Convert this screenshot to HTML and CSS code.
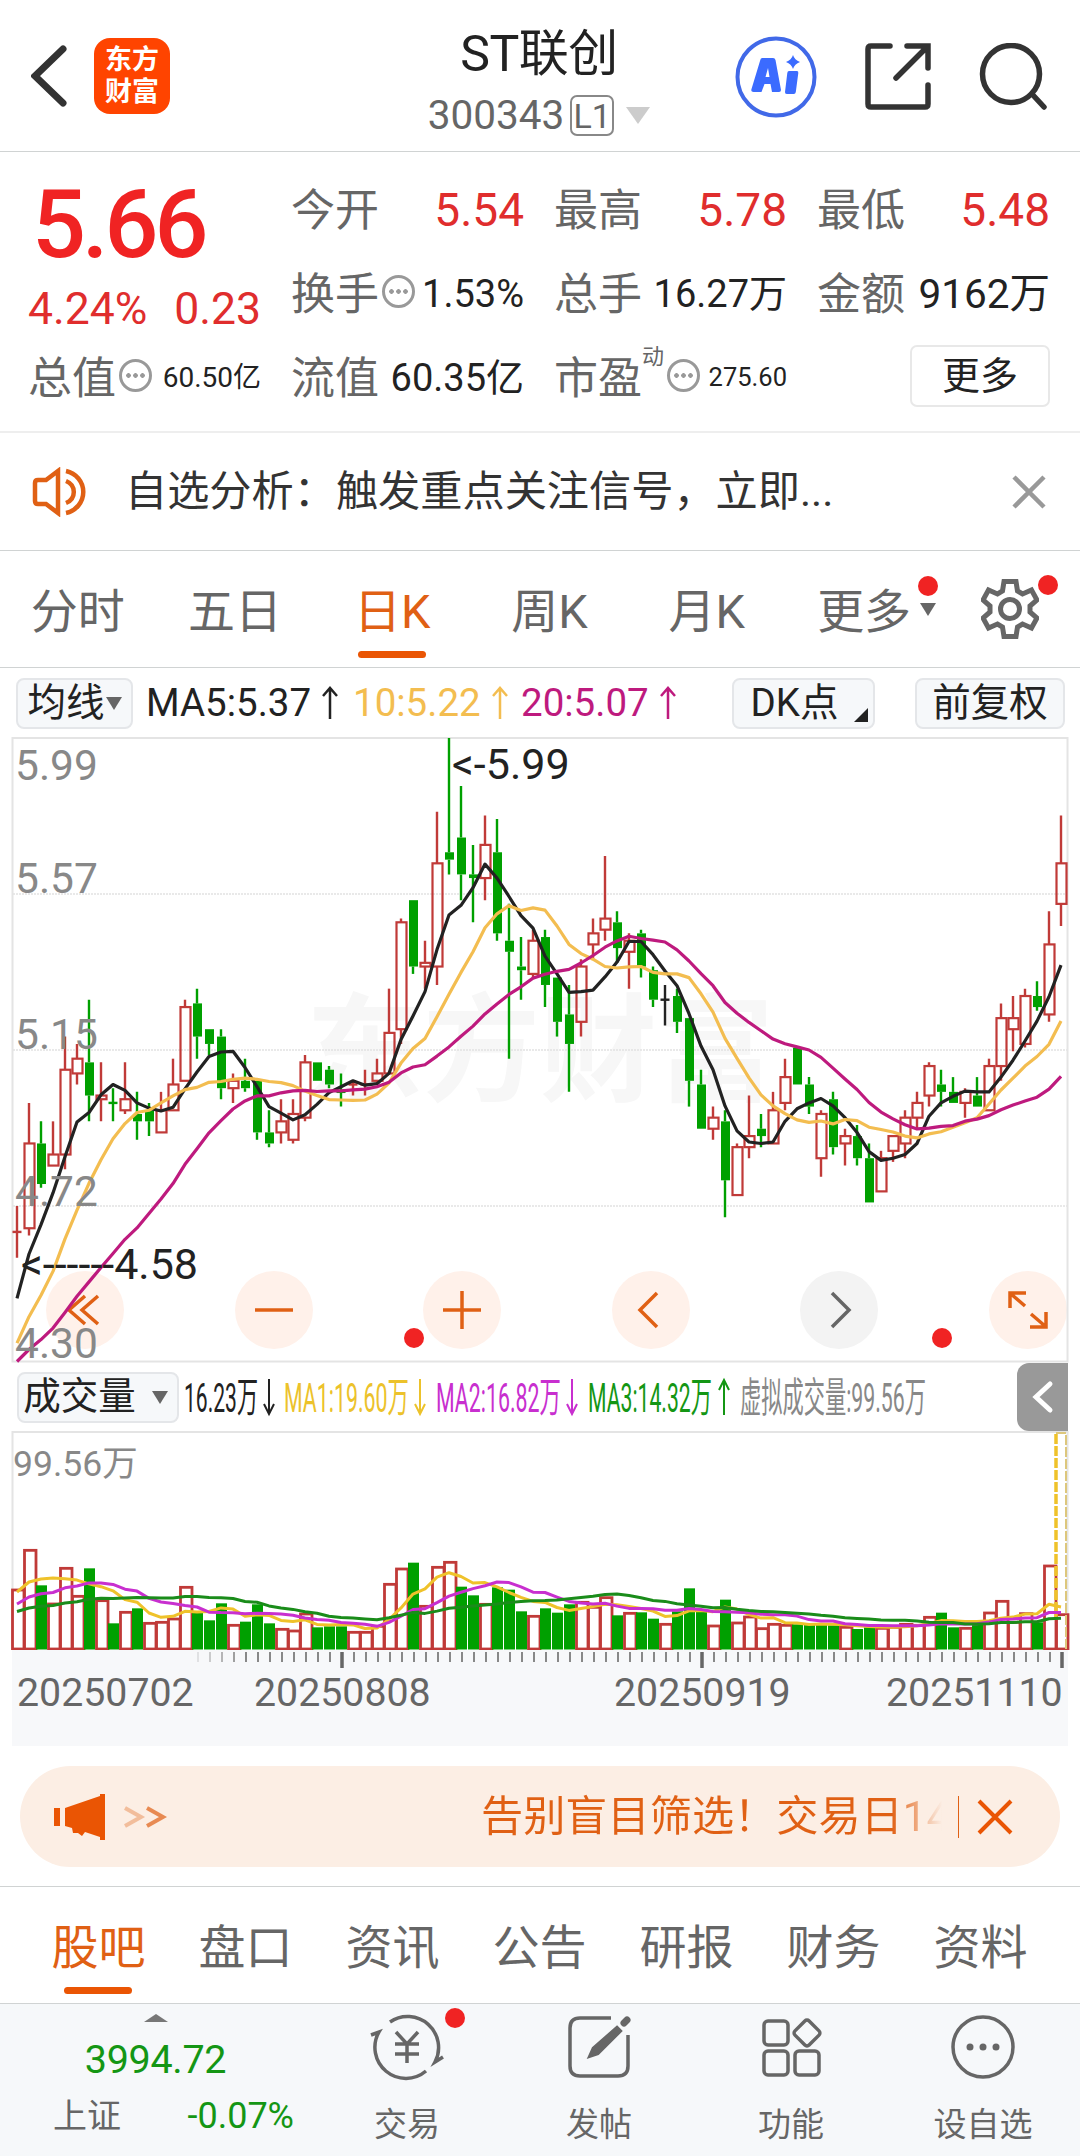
FILE: index.html
```html
<!DOCTYPE html>
<html lang="zh-CN">
<head>
    <meta charset="UTF-8">
    <meta name="viewport" content="width=device-width, initial-scale=1.0">
    <title>ST联创 300343</title>
    <link rel="stylesheet" href="styles.css">
</head>
<body>
    <header class="top-bar">
        <div class="top-left">
            <svg class="back" width="36" height="62" viewBox="0 0 36 62"><path d="M32 4 L4 31 L32 58"/></svg>
            <div class="logo"><span>东方</span><span>财富</span></div>
        </div>
        <div class="top-title">
            <h1>ST联创</h1>
            <div class="code">300343<span class="level">L1</span><i class="tri tri-title"></i></div>
        </div>
        <div class="top-actions">
            <svg width="82" height="82" viewBox="0 0 82 82">
                <circle cx="41" cy="41" r="38.5" fill="none" stroke="#4169e8" stroke-width="4"/>
                <path d="M27 22 h11 q2 0 2.500 2 l5.500 30 q0 2 -2 2 h-7 l-1.500 -8 h-6 l-3 8 h-8 q-3 0 -2 -3 l8.500 -28 q.500 -3 2 -3 z M33 32 l-2.500 9 h4 z" fill="#3b6bff" fill-rule="evenodd"/>
                <path d="M54 35 h8 q1.500 0 1.300 2 l-2.500 19 q-.3 2 -2 2 h-7 q-2 0 -1.800 -2 l2.300 -19 q.2 -2 1.700 -2 z" fill="#3b6bff"/>
                <path d="M58 19 q1.500 5 7 7 q-5.500 2 -7 7 q-1.500 -5 -7 -7 q5.500 -2 7 -7 z" fill="#3b6bff"/>
            </svg>
            <svg class="stroke-dark" width="66" height="68" viewBox="0 0 66 68">
                <path d="M25 3 H6 Q3 3 3 6 V61 Q3 64 6 64 H60 Q63 64 63 61 V42"/>
                <path d="M42 3 H63 V25 M62 4 L31 35"/>
            </svg>
            <svg class="stroke-dark" width="68" height="68" viewBox="0 0 68 68">
                <circle cx="32" cy="31" r="28.500"/><path d="M53 51 L65 64"/>
            </svg>
        </div>
    </header>

    <section class="quote">
        <div class="price">
            <strong>5.66</strong>
            <div class="change"><span>4.24%</span><span>0.23</span></div>
        </div>
        <div class="cell"><label>今开</label><b class="up">5.54</b></div>
        <div class="cell"><label>最高</label><b class="up">5.78</b></div>
        <div class="cell"><label>最低</label><b class="up">5.48</b></div>
        <div class="cell"><label>换手</label><i class="info"></i><b class="mid">1.53%</b></div>
        <div class="cell"><label>总手</label><b class="mid">16.27万</b></div>
        <div class="cell"><label>金额</label><b class="wide">9162万</b></div>
        <div class="cell"><label>总值</label><i class="info"></i><b class="small">60.50亿</b></div>
        <div class="cell"><label>流值</label><b class="mid">60.35亿</b></div>
        <div class="cell"><label>市盈</label><sup>动</sup><i class="info"></i><b class="tiny">275.60</b></div>
        <div class="cell"><button class="more">更多</button></div>
    </section>

    <section class="notice">
        <svg width="60" height="50" viewBox="0 0 60 50">
            <path d="M3 16 q0 -3 3 -3 h8 l12 -9 v42 l-12 -9 h-8 q-3 0 -3 -3 z"/>
            <path d="M34 14 a13 12 0 0 1 0 22 M34 4 a22 21.500 0 0 1 0 42"/>
        </svg>
        <p>自选分析：触发重点关注信号，立即...</p>
        <svg class="close" width="34" height="34" viewBox="0 0 34 34"><path d="M2 2 L32 32 M32 2 L2 32"/></svg>
    </section>

    <nav class="period-tabs">
        <a>分时</a>
        <a>五日</a>
        <a class="active">日K</a>
        <a>周K</a>
        <a>月K</a>
        <a class="has-menu">更多<i class="tri tri-more"></i><i class="dot dot-more"></i></a>
        <a class="settings">
            <svg width="58" height="60" viewBox="0 0 58 60">
                <path d="M23 2.500 H35 L36.500 12 L41.500 15 L50.500 11 L56 21 L49 27 V33 L56 39 L50.500 49 L41.500 45 L36.500 48 L35 57.500 H23 L21.500 48 L16.500 45 L7.500 49 L2 39 L9 33 V27 L2 21 L7.500 11 L16.500 15 L21.500 12 Z"/>
                <circle cx="29" cy="30" r="9.500"/>
            </svg>
            <i class="dot dot-settings"></i>
        </a>
    </nav>

    <div class="ma-bar">
        <button class="chip chip-ma">均线<i class="tri tri-ma"></i></button>
        <span class="ma ma5">MA5:5.37<svg width="18" height="34" viewBox="0 0 18 34"><path d="M9 33 V2 M2 10 L9 2 L16 10"/></svg></span>
        <span class="ma ma10">10:5.22<svg width="18" height="34" viewBox="0 0 18 34"><path d="M9 33 V2 M2 10 L9 2 L16 10"/></svg></span>
        <span class="ma ma20">20:5.07<svg width="18" height="34" viewBox="0 0 18 34"><path d="M9 33 V2 M2 10 L9 2 L16 10"/></svg></span>
        <button class="chip chip-dk">DK点<i class="corner"></i></button>
        <button class="chip chip-fq">前复权</button>
    </div>

    <section class="kline">
        <div class="chart-tools">
            <button><svg width="40" height="40" viewBox="0 0 40 40"><path d="M20 6 L4 20 L20 34 M33 6 L17 20 L33 34"/></svg></button>
            <button><svg width="40" height="40" viewBox="0 0 40 40"><path d="M1 20 H39"/></svg></button>
            <button><svg width="40" height="40" viewBox="0 0 40 40"><path d="M1 20 H39 M20 1 V39"/></svg></button>
            <button><svg width="40" height="40" viewBox="0 0 40 40"><path d="M26 3 L9 20 L26 37"/></svg></button>
            <button class="off"><svg width="40" height="40" viewBox="0 0 40 40"><path d="M13 3 L30 20 L13 37"/></svg></button>
            <button><svg width="40" height="40" viewBox="0 0 40 40"><path d="M2 18 V3 H18 M3 4 L17 16 M38 22 V37 H22 M37 36 L23 24"/></svg></button>
        </div>
        <svg id="kline" width="1080" height="626" viewBox="0 737 1080 626"></svg>
        <i class="dot dot-tool-a"></i>
        <i class="dot dot-tool-b"></i>
    </section>

    <div class="vol-bar">
        <button class="chip chip-vol">成交量<i class="tri tri-vol"></i></button>
        <svg id="vol-legend" width="750" height="60" viewBox="180 1366 750 60"></svg>
        <button class="side-tab"><svg width="22" height="34" viewBox="0 0 22 34"><path d="M18 4 L4 17 L18 30"/></svg></button>
    </div>

    <svg id="volume" class="volume" width="1080" height="219" viewBox="0 1431 1080 219"></svg>
    <svg id="axis" class="axis" width="1056" height="96" viewBox="12 1650 1056 96"></svg>

    <aside class="promo">
        <svg width="54" height="46" viewBox="0 0 54 46"><path d="M0 14 h6 v18 h-6 z M11 14 L46 2 V0 H51 V46 H46 V43 L31 38 L28 42 L24 39 L19 39 L18 34 L11 32 Z" fill="#ea5504"/></svg>
        <svg class="chevrons" width="44" height="22" viewBox="0 0 44 22"><path d="M2 2 L18 11 L2 20" opacity=".35"/><path d="M24 2 L40 11 L24 20" opacity=".7"/></svg>
        <p>告别盲目筛选！交易日14</p>
        <i class="divider"></i>
        <svg class="promo-close" width="36" height="36" viewBox="0 0 36 36"><path d="M2 2 L34 34 M34 2 L2 34"/></svg>
    </aside>

    <nav class="info-tabs">
        <a class="active">股吧</a><a>盘口</a><a>资讯</a><a>公告</a><a>研报</a><a>财务</a><a>资料</a>
    </nav>

    <footer class="bottom-bar">
        <div class="index">
            <i class="tri-up"></i>
            <span class="index-value">3994.72</span>
            <div class="index-row"><span>上证</span><span class="down">-0.07%</span></div>
        </div>
        <a>
            <svg width="76" height="68" viewBox="0 0 76 68">
                <path d="M21 9 A31 31 0 0 1 66 49 L74 44 M57 58 A31 31 0 0 1 10 19 L2 22"/>
                <path d="M27 19 L38 31 L49 19 M38 31 V50 M26 31 H50 M26 41 H50"/>
            </svg>
            <span>交易</span><i class="dot dot-trade"></i>
        </a>
        <a>
            <svg width="64" height="68" viewBox="0 0 64 68">
                <path d="M44 5 H13 Q3 5 3 15 V53 Q3 63 13 63 H51 Q61 63 61 53 V22"/>
                <path d="M50 14 L54 18 L31 41 L22 44 L26 35 Z" fill="#666" stroke-width="2.500"/><path d="M57 10 L60 7" stroke-width="7" stroke-linecap="round"/>
            </svg>
            <span>发帖</span>
        </a>
        <a>
            <svg width="64" height="68" viewBox="0 0 64 68">
                <rect x="5" y="8" width="24" height="24" rx="4"/><rect x="5" y="38" width="24" height="24" rx="4"/><rect x="36" y="38" width="24" height="24" rx="4"/>
                <rect x="38" y="10" width="20" height="20" rx="3" transform="rotate(45 48 20)"/>
            </svg>
            <span>功能</span>
        </a>
        <a>
            <svg width="66" height="68" viewBox="0 0 66 68">
                <circle cx="33" cy="34" r="30"/>
                <g fill="#666" stroke="none"><circle cx="20" cy="34" r="3.500"/><circle cx="33" cy="34" r="3.500"/><circle cx="46" cy="34" r="3.500"/></g>
            </svg>
            <span>设自选</span>
        </a>
    </footer>
    <script src="chart.js"></script>
</body>
</html>
```
FILE: styles.css
```css
* {
    box-sizing: border-box;
    margin: 0;
    padding: 0;
}

body {
    width: 1080px;
    height: 2156px;
    overflow: hidden;
    background: #fff;
    color: #222;
    font-family: Roboto, "Noto Sans CJK SC", sans-serif;
    line-height: 1;
}

svg {
    display: block;
    flex: none;
    fill: none;
}

button {
    border: none;
    font-family: inherit;
    color: inherit;
    line-height: 1;
}

i {
    display: block;
    flex: none;
}

/* Small triangles and red badges */
.tri {
    width: 0;
    height: 0;
    border: 8px solid transparent;
    border-top: 13px solid #666;
    border-bottom: none;
}

.dot {
    position: absolute;
    width: 20px;
    height: 20px;
    border-radius: 50%;
    background: #f02323;
}

/* Top bar */
.top-bar {
    display: grid;
    grid-template-columns: 1fr auto 1fr;
    height: 152px;
    padding: 0 33px 0 31px;
    border-bottom: 1px solid #d0d3d3;
}

.top-left {
    display: flex;
    align-items: flex-start;
    padding-top: 38px;
}

.back {
    margin-top: 7px;
    stroke: #333;
    stroke-width: 7;
    stroke-linecap: round;
}

.logo {
    display: flex;
    flex-direction: column;
    justify-content: center;
    align-items: center;
    gap: 2px;
    width: 76px;
    height: 76px;
    margin-left: 27px;
    border-radius: 16px;
    background: #ff4400;
    color: #fff;
    font-size: 27px;
    font-weight: 700;
}

.logo span {
    line-height: 30px;
}

.top-title {
    display: flex;
    flex-direction: column;
    align-items: center;
    padding-top: 30px;
}

.top-title h1 {
    font-size: 50px;
    font-weight: 400;
    line-height: 48px;
    letter-spacing: -0.5px;
}

.code {
    display: flex;
    align-items: center;
    margin-top: 16px;
    height: 42px;
    color: #666;
    font-size: 40.5px;
}

.level {
    height: 41px;
    width: 44px;
    margin-left: 6px;
    border: 2px solid #888;
    border-radius: 7px;
    font-size: 34px;
    line-height: 39px;
    text-align: center;
}

.tri-title {
    margin-left: 12px;
    border-width: 17px 12px 0;
    border-top-color: #ccc;
}

.top-actions {
    display: flex;
    justify-content: flex-end;
    align-items: center;
    gap: 48px;
    padding-top: 2px;
}

.stroke-dark {
    stroke: #333;
    stroke-width: 5.5;
    stroke-linecap: round;
}

/* Quote grid */
.quote {
    display: grid;
    grid-template-columns: repeat(4, 233px);
    grid-auto-rows: 84px;
    column-gap: 30px;
    height: 281px;
    padding: 16px 28px 0 28px;
    border-bottom: 2px solid #eee;
}

.price {
    grid-row: span 2;
    color: #f02323;
}

.price strong {
    display: block;
    height: 118px;
    padding-left: 4px;
    font-size: 95px;
    font-weight: 500;
    line-height: 114px;
    letter-spacing: -4px;
}

.change {
    display: flex;
    justify-content: space-between;
    color: #e02d2d;
    font-size: 44.5px;
    line-height: 47px;
}

.cell {
    display: flex;
    align-items: center;
    white-space: nowrap;
}

.cell label {
    padding-top: 1px;
    color: #666;
    font-size: 44px;
}

.cell b {
    margin-left: auto;
    font-weight: 400;
    color: #222;
}

.cell .up {
    color: #e02d2d;
    font-size: 46px;
}

.cell .mid {
    font-size: 38px;
}

.cell .wide {
    font-size: 40.5px;
}

.cell .small {
    font-size: 28px;
}

.cell .tiny {
    font-size: 25.5px;
}

.cell sup {
    align-self: flex-start;
    margin-top: 10px;
    color: #666;
    font-size: 22px;
}

.info {
    width: 33px;
    height: 33px;
    margin: -5px 0 0 3px;
    border: 3px solid #999;
    border-radius: 50%;
    background:
        radial-gradient(circle, #999 2px, transparent 2.6px) -7px 0,
        radial-gradient(circle, #999 2px, transparent 2.6px) 0 0,
        radial-gradient(circle, #999 2px, transparent 2.6px) 7px 0;
    background-repeat: no-repeat;
}

.more {
    width: 140px;
    height: 62px;
    margin: -4px 0 0 auto;
    border: 2px solid #e8e8e8;
    border-radius: 7px;
    background: #fff;
    font-size: 38px;
}

/* Notice line */
.notice {
    display: flex;
    align-items: center;
    height: 118px;
    padding: 0 34px 0 32px;
    border-bottom: 1px solid #d0d3d3;
    stroke: #e06014;
    stroke-width: 4.5;
}

.notice p {
    flex: 1;
    margin-left: 33px;
    padding-top: 1px;
    color: #333;
    font-size: 42.2px;
    stroke: none;
}

.close {
    stroke: #999;
}

/* Period tabs */
.period-tabs {
    display: grid;
    grid-template-columns: repeat(6, 157.3px) 1fr;
    height: 117px;
    border-bottom: 1px solid #d0d3d3;
    color: #666;
    font-size: 47px;
}

.period-tabs a {
    position: relative;
    display: flex;
    justify-content: center;
    align-items: center;
    padding: 5px 2px 0 0;
}

.active {
    color: #e06014;
}

.active::after {
    content: "";
    position: absolute;
    left: 50%;
    bottom: 9px;
    width: 68px;
    height: 7px;
    margin-left: -35px;
    border-radius: 4px;
    background: #ea5504;
}

.tri-more {
    position: absolute;
    left: 134px;
    top: 52px;
}

.dot-more {
    left: 132px;
    top: 25px;
}

.period-tabs .settings {
    padding: 0 3px 0 0;
}

.settings svg {
    stroke: #666;
    stroke-width: 5;
}

.dot-settings {
    left: 94px;
    top: 24px;
}

/* Moving average legend */
.ma-bar {
    display: flex;
    align-items: center;
    height: 68px;
    padding: 2px 15px 0 16px;
    font-size: 38.5px;
}

.chip {
    display: flex;
    align-items: center;
    justify-content: center;
    height: 51px;
    border: 2px solid #e4e6e9;
    border-radius: 8px;
    background: #f6f8fa;
    font-size: 38.5px;
}

.chip-ma {
    width: 117px;
    margin-right: 13px;
}

.tri-ma {
    margin-left: 1px;
}

.ma {
    display: flex;
    align-items: center;
}

.ma svg {
    margin-left: 10px;
    stroke: currentColor;
    stroke-width: 2.5;
}

.ma5 {
    width: 207px;
}

.ma10 {
    width: 168px;
    color: #f3bd50;
}

.ma20 {
    color: #be1a7e;
}

.chip-dk {
    position: relative;
    width: 143px;
    margin-left: auto;
    padding-right: 18px;
}

.corner {
    position: absolute;
    right: 5px;
    bottom: 5px;
    border-left: 14px solid transparent;
    border-bottom: 14px solid #222;
}

.chip-fq {
    width: 150px;
    margin-left: 40px;
}

/* Candle chart, drawn over the round tool buttons */
.kline {
    position: relative;
    height: 626px;
    margin-top: 1px;
}

#kline {
    position: relative;
}

.chart-tools {
    position: absolute;
    left: 46px;
    right: 13px;
    top: 534px;
    display: flex;
    justify-content: space-between;
}

.chart-tools button {
    display: flex;
    justify-content: center;
    align-items: center;
    width: 78px;
    height: 78px;
    border-radius: 50%;
    background: #fff1ea;
    stroke: #e06014;
    stroke-width: 3.5;
}

.chart-tools .off {
    background: #f3f3f3;
    stroke: #666;
}

.dot-tool-a {
    left: 404px;
    top: 591px;
}

.dot-tool-b {
    left: 932px;
    top: 591px;
}

svg text {
    stroke: none;
}

.scale {
    fill: #888;
    font-size: 42.5px;
}

.mark {
    fill: #222;
    font-size: 43px;
}

.watermark {
    fill: #f7f7f7;
    font-size: 117px;
    font-weight: 700;
}

/* Volume */
.vol-bar {
    display: flex;
    align-items: center;
    height: 68px;
    padding: 0 12px 0 17px;
}

.chip-vol {
    width: 162px;
    margin-right: 1px;
    padding-right: 5px;
    font-size: 37.5px;
}

.tri-vol {
    margin-left: 16px;
}

.side-tab {
    display: flex;
    justify-content: center;
    align-items: center;
    width: 51px;
    height: 68px;
    margin-left: auto;
    border-radius: 12px 0 0 12px;
    background: #999;
    stroke: #fff;
    stroke-width: 5;
    stroke-linecap: round;
}

.legend {
    font-size: 41px;
}

.volume-max {
    fill: #888;
    font-size: 35.5px;
}

.axis {
    margin-left: 12px;
    background: #f7f8fa;
}

.date {
    fill: #666;
    font-size: 39.3px;
}

/* Promo strip */
.promo {
    display: flex;
    align-items: center;
    width: 1040px;
    height: 101px;
    margin: 20px 20px 19px;
    padding: 0 24px 0 34px;
    border-radius: 51px;
    background: #fceee4;
    stroke-width: 4;
}

.chevrons {
    margin-left: 15px;
    stroke: #e06014;
}

.promo p {
    width: 461px;
    margin-left: 314px;
    padding-top: 1px;
    overflow: hidden;
    font-size: 42.2px;
    line-height: 50px;
    white-space: nowrap;
    color: transparent;
    background: linear-gradient(90deg, #e06014 89%, rgba(224, 96, 20, 0) 100%);
    -webkit-background-clip: text;
    background-clip: text;
}

.divider {
    width: 1px;
    height: 42px;
    margin: 0 18px 0 16px;
    background: #e06014;
}

.promo-close {
    stroke: #ea5504;
}

/* Info tabs */
.info-tabs {
    display: flex;
    height: 117px;
    padding-left: 25px;
    border-top: 1px solid #d0d3d3;
    color: #666;
    font-size: 47px;
}

.info-tabs a {
    position: relative;
    display: flex;
    justify-content: center;
    align-items: center;
    width: 147px;
    padding-top: 5px;
}

/* Bottom bar */
.bottom-bar {
    display: grid;
    grid-template-columns: 311px repeat(4, 192px);
    height: 154px;
    border-top: 1px solid #d0d3d3;
    background: #f6f8fa;
    color: #666;
}

.bottom-bar a {
    position: relative;
    display: flex;
    flex-direction: column;
    align-items: center;
    padding-top: 9px;
    font-size: 33px;
    stroke: #666;
    stroke-width: 3.5;
}

.bottom-bar a span {
    margin-top: 27px;
    stroke: none;
}

.index {
    display: flex;
    flex-direction: column;
    align-items: center;
}

.tri-up {
    margin-top: 10px;
    border: 12px solid transparent;
    border-top: none;
    border-bottom: 8px solid #777;
}

.index-value {
    margin-top: 18px;
    color: #149614;
    font-size: 39.5px;
    letter-spacing: -0.3px;
}

.index-row {
    display: flex;
    align-items: center;
    justify-content: space-between;
    width: 241px;
    margin: 18px 0 0 36px;
    font-size: 34px;
}

.down {
    color: #149614;
    font-size: 36px;
}

.dot-trade {
    left: 134px;
    top: 4px;
}
```
FILE: chart.js
```js
const RED = '#c03a38';
const GREEN = '#00a000';
const BLACK = '#222';

// colour, high, body top, body bottom, low (in cents)
const candles = `
r 472 465 465 458|r 500 489 466 464|g 495 489 478 477|r 495 486 483 483|r 518 509 486 482|r 516 512 508 505
g 528 511 502 495|r 511 502 501 495|g 504 500 500 495|r 511 501 498 497|g 503 497 495 490|g 500 498 495 491
r 503 498 492 492|r 512 505 498 498|r 528 526 506 506|g 531 527 518 512|g 520 520 516 513|g 520 518 504 501
r 508 506 504 500|g 512 506 504 503|g 506 506 492 490|g 498 492 489 488|r 501 495 492 489|r 501 497 490 489
r 513 511 496 495|g 511 511 506 506|g 510 509 505 504|g 508 503 503 499|r 506 505 505 502|r 509 505 505 502
r 512 508 506 505|r 531 519 508 508|r 550 549 520 516|g 555 555 537 535|r 544 538 537 531|r 579 565 537 532
g 599 568 566 562|g 586 572 562 555|g 570 562 561 549|r 578 570 561 555|g 577 568 546 544|g 554 544 541 512
g 545 537 536 528|r 547 544 535 534|g 547 545 532 526|g 534 534 522 518|g 532 524 516 503|r 539 537 522 518
r 550 546 543 539|r 567 550 547 544|g 552 549 542 538|r 546 544 541 531|g 547 546 537 534|g 537 536 528 526
k 532 528 528 521|g 531 529 522 519|g 523 523 506 499|g 509 505 493 493|r 499 496 493 490|g 498 495 479 469
r 489 488 475 475|r 502 491 488 485|g 497 493 491 488|r 503 498 489 489|r 512 507 500 498|g 515 515 505 505
g 507 505 499 497|r 498 497 485 480|g 503 501 488 486|r 493 491 489 483|g 494 491 485 483|g 489 485 473 473
r 487 485 476 476|r 491 491 487 484|r 498 496 489 485|r 503 500 496 493|r 511 510 502 499|g 509 505 503 499
g 507 503 500 500|r 504 503 500 496|g 507 502 499 499|r 512 510 498 498|r 527 523 510 506|r 529 523 520 514
r 531 529 516 515|g 533 529 526 525|r 552 543 524 522|r 578 565 554 548`
    .trim().split(/[|\n]/).map(s => {
        const [color, ...v] = s.split(' ');
        return { color, v: v.map(Number) };
    });

// bar height in pixels * 3, with the bar colour
const volumes = `r180 r299 g191 r138 r245 r161 g242 r148 g77 r113 g122 r80 r83 r93 r188 g113 g86 g137 r74 g82 g134 g77 r62 r57 r108
g65 g68 g68 r53 r53 r71 r197 r243 g259 r131 r248 r263 g187 g161 r137 g185 g178 g113 r101 g122 g109 g134 r143 r128 r157 g101
r110 g110 g91 r77 g113 g182 g116 r72 g148 r81 r99 r64 r77 r74 g74 g77 g74 g71 r68 g60 g65 r65 r68 r77 r74 r98 g109 g65 r65
g74 r111 r146 r83 r109 g80 r252 r106`
    .split(/\s+/).map(s => ({ color: s[0], h: Number(s.slice(1)) }));

// values before the first visible day, for the moving averages
const prevClose = [...Array(9).fill(424), 433, 417, 420, 421, 421, 434, 429, 438, 443, 460];
const prevVolume = [...Array(10).fill(90), 90, 95, 98, 103, 109, 149, 146, 123, 257];

const x = i => 17 + i * 12;
const y = c => 738 + (599 - c) * 3.686;
const vy = h => 1649 - h / 3;

function movingAverage(prev, values, n) {
    const all = prev.concat(values);
    return values.map((_, i) => {
        const end = prev.length + i + 1;
        return all.slice(Math.max(0, end - n), end).reduce((a, b) => a + b, 0) / n;
    });
}

function line(values, scale, color, width) {
    const pts = values.map((v, i) => `${x(i)},${scale(v).toFixed(1)}`).join(' ');
    return `<polyline points="${pts}" stroke="${color}" stroke-width="${width}" stroke-linejoin="round"/>`;
}

function drawKline() {
    let out = '<text class="watermark" x="306" y="1092">东方财富</text>';
    [894, 1050, 1206].forEach(g => {
        out += `<path d="M13 ${g}H1067" stroke="#e2e2e2" stroke-width="1.5" stroke-dasharray="2 1"/>`;
    });
    out += '<rect x="12.500" y="738" width="1055" height="623.500" stroke="#e4e4e4" stroke-width="2"/>';

    candles.forEach(({ color, v }, i) => {
        const [high, top, bottom, low] = v;
        const c = { r: RED, g: GREEN, k: BLACK }[color];
        const yt = y(top), yb = y(bottom);
        out += `<path d="M${x(i)} ${y(high)}V${yt}M${x(i)} ${yb}V${y(low)}" stroke="${c}" stroke-width="2.4"/>`;
        if (top === bottom) {
            out += `<path d="M${x(i) - 4.500} ${yt}h9" stroke="${c}" stroke-width="2.4"/>`;
        } else if (color === 'r') {
            out += `<rect x="${x(i) - 4.500}" y="${yt}" width="10" height="${yb - yt}" stroke="${c}" stroke-width="2.200"/>`;
        } else {
            out += `<rect x="${x(i) - 4}" y="${yt}" width="9" height="${yb - yt}" fill="${c}"/>`;
        }
    });

    const closes = candles.map(({ color, v }, i) => i === 87 ? 566 : color === 'g' ? v[2] : v[1]);
    out += line(movingAverage(prevClose, closes, 5), y, BLACK, 3.2);
    out += line(movingAverage(prevClose, closes, 10), y, '#f3bd50', 3.2);
    out += line(movingAverage(prevClose, closes, 20), y, '#be1a7e', 3.2);

    [['5.99', 780], ['5.57', 893], ['5.15', 1049], ['4.72', 1206], ['4.30', 1358]].forEach(([t, ty]) => {
        out += `<text class="scale" x="15" y="${ty}">${t}</text>`;
    });
    out += '<text class="mark" x="452" y="779">&lt;-5.99</text>';
    out += '<text class="mark" x="21" y="1279">&lt;------4.58</text>';
    document.getElementById('kline').innerHTML = out;
}

function drawLegend() {
    const items = [
        ['16.23万', 184, 74, '#222', 'down'],
        ['MA1:19.60万', 284, 125, '#ecc22b', 'down'],
        ['MA2:16.82万', 436, 125, '#c82fcf', 'down'],
        ['MA3:14.32万', 588, 124, '#149614', 'up'],
        ['虚拟成交量:99.56万', 740, 186, '#888', '']
    ];
    let out = '';
    items.forEach(([text, tx, len, color, arrow]) => {
        out += `<text class="legend" fill="${color}">${text}</text>`;
        const ax = tx + len + 11;
        if (arrow === 'down') {
            out += `<path d="M${ax} 1378V1413M${ax - 5} 1403L${ax} 1413L${ax + 5} 1403" stroke="${color}" stroke-width="2"/>`;
        } else if (arrow === 'up') {
            out += `<path d="M${ax + 1} 1414V1379M${ax - 4} 1389L${ax + 1} 1379L${ax + 6} 1389" stroke="${color}" stroke-width="2"/>`;
        }
    });
    const svg = document.getElementById('vol-legend');
    svg.innerHTML = out;
    // squeeze each label into its slot
    svg.querySelectorAll('text').forEach((el, i) => {
        const [, tx, len] = items[i];
        el.setAttribute('transform', `translate(${tx} 1411) scale(${len / el.getComputedTextLength()} 1)`);
    });
}

function drawVolume() {
    let out = '<path d="M12.500 1650V1432H1067.500V1650" stroke="#e4e4e4" stroke-width="2"/>';
    volumes.forEach(({ color, h }, i) => {
        const top = vy(h);
        if (color === 'r') {
            out += `<rect x="${x(i) - 4.500}" y="${top + 1}" width="11.500" height="${1648 - top}" stroke="${RED}" stroke-width="2.800"/>`;
        } else {
            out += `<rect x="${x(i) - 5}" y="${top}" width="11" height="${1649.500 - top}" fill="${GREEN}"/>`;
        }
    });
    out += '<path d="M1056 1434V1620" stroke="#efc22a" stroke-width="3.500" stroke-dasharray="10 2"/>';
    out += '<path d="M1056 1433H1066V1649" stroke="#ddc77c" stroke-width="2" stroke-dasharray="10 2"/>';
    const hs = volumes.map(v => v.h);
    out += line(movingAverage(prevVolume, hs, 5), vy, '#efc22a', 3);
    out += line(movingAverage(prevVolume, hs, 10), vy, '#c82fcf', 3);
    out += line(movingAverage(prevVolume, hs, 20), vy, '#1a8c1a', 3);
    out += '<text class="volume-max" x="13" y="1476">99.56万</text>';
    document.getElementById('volume').innerHTML = out;
}

function drawAxis() {
    let out = '';
    for (let i = 15; i < 88; i++) {
        const major = i === 27 || i === 57 || i === 87;
        const opacity = Math.min(1, (i - 14) * 0.2);
        out += `<path d="M${x(i) + 1} 1652v${major ? 16 : 10}" stroke="${major ? '#666' : '#888'}" stroke-width="${major ? 3.500 : 2}" opacity="${opacity}"/>`;
    }
    [['20250702', 17], ['20250808', 254], ['20250919', 614], ['20251110', 886]].forEach(([t, tx]) => {
        out += `<text class="date" x="${tx}" y="1706">${t}</text>`;
    });
    document.getElementById('axis').innerHTML = out;
}

drawKline();
drawLegend();
drawVolume();
drawAxis();
```
